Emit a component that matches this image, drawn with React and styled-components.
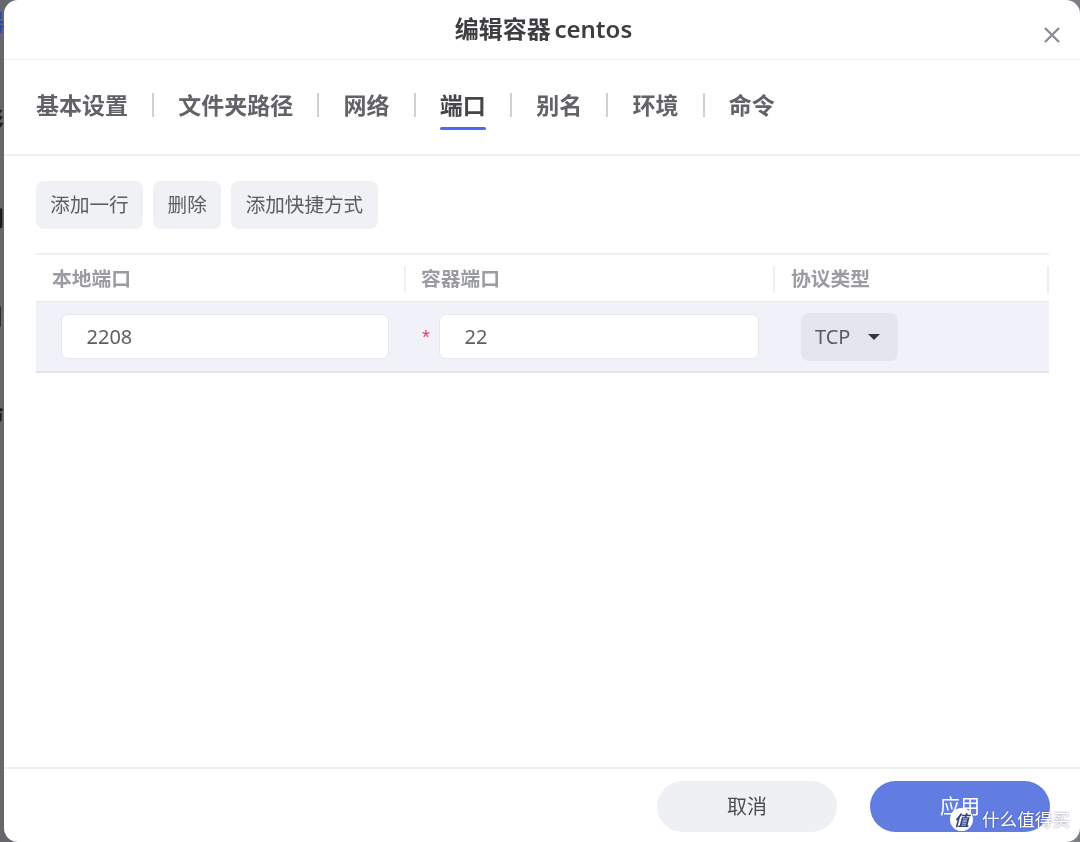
import React from "react";
import styled, { createGlobalStyle } from "styled-components";

const Global = createGlobalStyle`
  html, body { margin: 0; padding: 0; background: #77787c; }
  body { font-family: "Noto Sans", "Noto Sans CJK SC", sans-serif; overflow: hidden; }
  * { box-sizing: border-box; }
`;

const CJK = `"Noto Sans", "Noto Sans CJK SC", sans-serif`;

const Page = styled.div`
  width: 1080px;
  height: 842px;
  display: flex;
  background: linear-gradient(90deg, #66676b 0, #7d7e82 100%);
  overflow: hidden;
  filter: blur(0.4px);
`;

const Backdrop = styled.div`
  width: 4px;
  flex: none;
  overflow: hidden;
  display: flex;
  flex-direction: column;
  align-items: flex-end;
  padding-top: 8px;
  gap: 72px;
`;

const BackGlyph = styled.span`
  display: block;
  width: 4px;
  font-size: 22px;
  line-height: 26px;
  font-weight: 700;
  color: ${(p) => p.$color || "#1c1c1e"};
  direction: rtl;
  white-space: nowrap;
`;

const Dialog = styled.div`
  flex: 1;
  height: 842px;
  background: #fff;
  border-radius: 14px;
  display: flex;
  flex-direction: column;
  position: relative;
  overflow: hidden;
`;

const Header = styled.header`
  height: 60px;
  flex: none;
  display: flex;
  align-items: center;
  justify-content: center;
  border-bottom: 1px solid #eeeff1;
  position: relative;
  padding: 0 0 1px 3px;
`;

const Title = styled.h1`
  margin: 0;
  font: 600 24px/32px ${CJK};
  word-spacing: -2.5px;
  color: #3d3e42;
`;

const Close = styled.button`
  position: absolute;
  right: 19px;
  top: 26px;
  width: 18px;
  height: 18px;
  padding: 0;
  border: 0;
  background: none;
  color: #8a8e94;
  display: flex;
`;

const Tabs = styled.nav`
  height: 96px;
  flex: none;
  display: flex;
  align-items: center;
  padding: 0 0 5px 32px;
  border-bottom: 2px solid #eeeff2;
`;

const Tab = styled.div`
  position: relative;
  padding: 0 25.15px;
  margin-left: ${(p) => (p.$first ? "-25.15px" : "0")};
  font: 700 23px/32px ${CJK};
  color: ${(p) => (p.$active ? "#45464a" : "#626367")};
  &:not(:last-child)::after {
    content: "";
    position: absolute;
    right: -1px;
    top: 4px;
    width: 2px;
    height: 24px;
    background: #cfd0d3;
  }
`;

const TabLabel = styled.span`
  display: block;
  position: relative;
  &::after {
    content: "";
    display: ${(p) => (p.$active ? "block" : "none")};
    position: absolute;
    left: 0;
    right: 0;
    bottom: -9px;
    height: 3px;
    border-radius: 2px;
    background: #4a6cf4;
  }
`;

const Content = styled.main`
  flex: 1;
  padding: 25px 31px 0 32px;
`;

const Toolbar = styled.div`
  display: flex;
  gap: 10.3px;
`;

const ToolButton = styled.button`
  height: 48px;
  padding: 0 14.3px;
  border: 0;
  border-radius: 8px;
  background: #f0f1f4;
  color: #5c5d61;
  font: 400 19.6px/28px ${CJK};
`;

const Table = styled.div`
  margin-top: 24px;
  border-top: 2px solid #eeeff2;
`;

const HeadRow = styled.div`
  display: grid;
  grid-template-columns: 370px 369px 274px;
  height: 46px;
  align-items: center;
`;

const HeadCell = styled.div`
  height: 27px;
  margin-top: 2px;
  padding-left: ${(p) => p.$pad || 16}px;
  border-right: 2px solid #eff0f2;
  font: 700 19.8px/26px ${CJK};
  color: #9a9ca2;
`;

const Row = styled.div`
  display: grid;
  grid-template-columns: 370px 369px 274px;
  height: 72px;
  background: #f0f1f9;
  border-top: 1px solid #e9eaf2;
  border-bottom: 2px solid #e3e4ec;
`;

const Cell = styled.div`
  display: flex;
  align-items: center;
  padding-left: ${(p) => p.$pad}px;
  position: relative;
`;

const Star = styled.span`
  position: absolute;
  left: 16px;
  top: 22px;
  font: 400 20px/26px "Liberation Sans", sans-serif;
  color: #e8405c;
`;

const Input = styled.input`
  width: ${(p) => p.$w}px;
  height: 45px;
  padding: 0 24.5px;
  border: 1px solid #e5e6ee;
  border-radius: 7px;
  background: #fff;
  color: #5e5f63;
  font: 400 20px/28px "Noto Sans", sans-serif;
  outline: none;
`;

const Select = styled.button`
  width: 97px;
  height: 48px;
  padding: 0 0 0 14px;
  border: 0;
  border-radius: 8px;
  background: #e4e6ee;
  display: flex;
  align-items: center;
  gap: 18px;
  color: #5a5b60;
  font: 400 20px/28px "Noto Sans", sans-serif;
`;

const Caret = styled.span`
  width: 0;
  height: 0;
  border-left: 6.5px solid transparent;
  border-right: 6.5px solid transparent;
  border-top: 6.5px solid #36373b;
`;

const Footer = styled.footer`
  height: 75px;
  flex: none;
  border-top: 2px solid #eeeff1;
  display: flex;
  justify-content: flex-end;
  gap: 33px;
  padding: 12px 30px 0 0;
`;

const FootButton = styled.button`
  width: 180px;
  height: 51px;
  border: 0;
  border-radius: 26px;
  background: ${(p) => (p.$primary ? "#627de2" : "#eff0f4")};
  color: ${(p) => (p.$primary ? "#fff" : "#4c4d51")};
  font: 400 20px/28px ${CJK};
`;

const Watermark = styled.div`
  position: absolute;
  right: 10px;
  bottom: 11px;
  display: flex;
  align-items: center;
  gap: 9px;
  color: #fff;
  font: 400 17.6px/24px "Noto Sans CJK SC", sans-serif;
  text-shadow: 0 0 2px rgba(40, 50, 90, 0.7);
`;

const WatermarkBadge = styled.span`
  width: 23px;
  height: 23px;
  border-radius: 50%;
  background: #fff;
  color: #2c3f86;
  font: 700 15px/23px "Noto Sans CJK SC", sans-serif;
  font-style: italic;
  text-align: center;
  text-shadow: none;
`;

const tabs = ["基本设置", "文件夹路径", "网络", "端口", "别名", "环境", "命令"];

export default function App() {
  return (
    <Page>
      <Global />
      <Backdrop>
        <BackGlyph $color="#2b46b0">器</BackGlyph>
        <BackGlyph>影</BackGlyph>
        <BackGlyph>网</BackGlyph>
        <BackGlyph>目</BackGlyph>
        <BackGlyph>命</BackGlyph>
      </Backdrop>
      <Dialog>
        <Header>
          <Title>编辑容器 centos</Title>
          <Close aria-label="关闭">
            <svg width="18" height="18" viewBox="0 0 18 18" fill="none" stroke="currentColor" strokeWidth="2.4">
              <path d="M2 2 L16 16 M16 2 L2 16" />
            </svg>
          </Close>
        </Header>
        <Tabs>
          {tabs.map((t, i) => (
            <Tab key={t} $first={i === 0} $active={t === "端口"}>
              <TabLabel $active={t === "端口"}>{t}</TabLabel>
            </Tab>
          ))}
        </Tabs>
        <Content>
          <Toolbar>
            <ToolButton>添加一行</ToolButton>
            <ToolButton>删除</ToolButton>
            <ToolButton>添加快捷方式</ToolButton>
          </Toolbar>
          <Table>
            <HeadRow>
              <HeadCell>本地端口</HeadCell>
              <HeadCell $pad={15}>容器端口</HeadCell>
              <HeadCell $pad={16}>协议类型</HeadCell>
            </HeadRow>
            <Row>
              <Cell $pad={25}>
                <Input $w={328} readOnly value="2208" />
              </Cell>
              <Cell $pad={33}>
                <Star>*</Star>
                <Input $w={320} readOnly value="22" />
              </Cell>
              <Cell $pad={26}>
                <Select>
                  TCP
                  <Caret />
                </Select>
              </Cell>
            </Row>
          </Table>
        </Content>
        <Footer>
          <FootButton>取消</FootButton>
          <FootButton $primary>应用</FootButton>
        </Footer>
        <Watermark>
          <WatermarkBadge>值</WatermarkBadge>
          什么值得买
        </Watermark>
      </Dialog>
    </Page>
  );
}
